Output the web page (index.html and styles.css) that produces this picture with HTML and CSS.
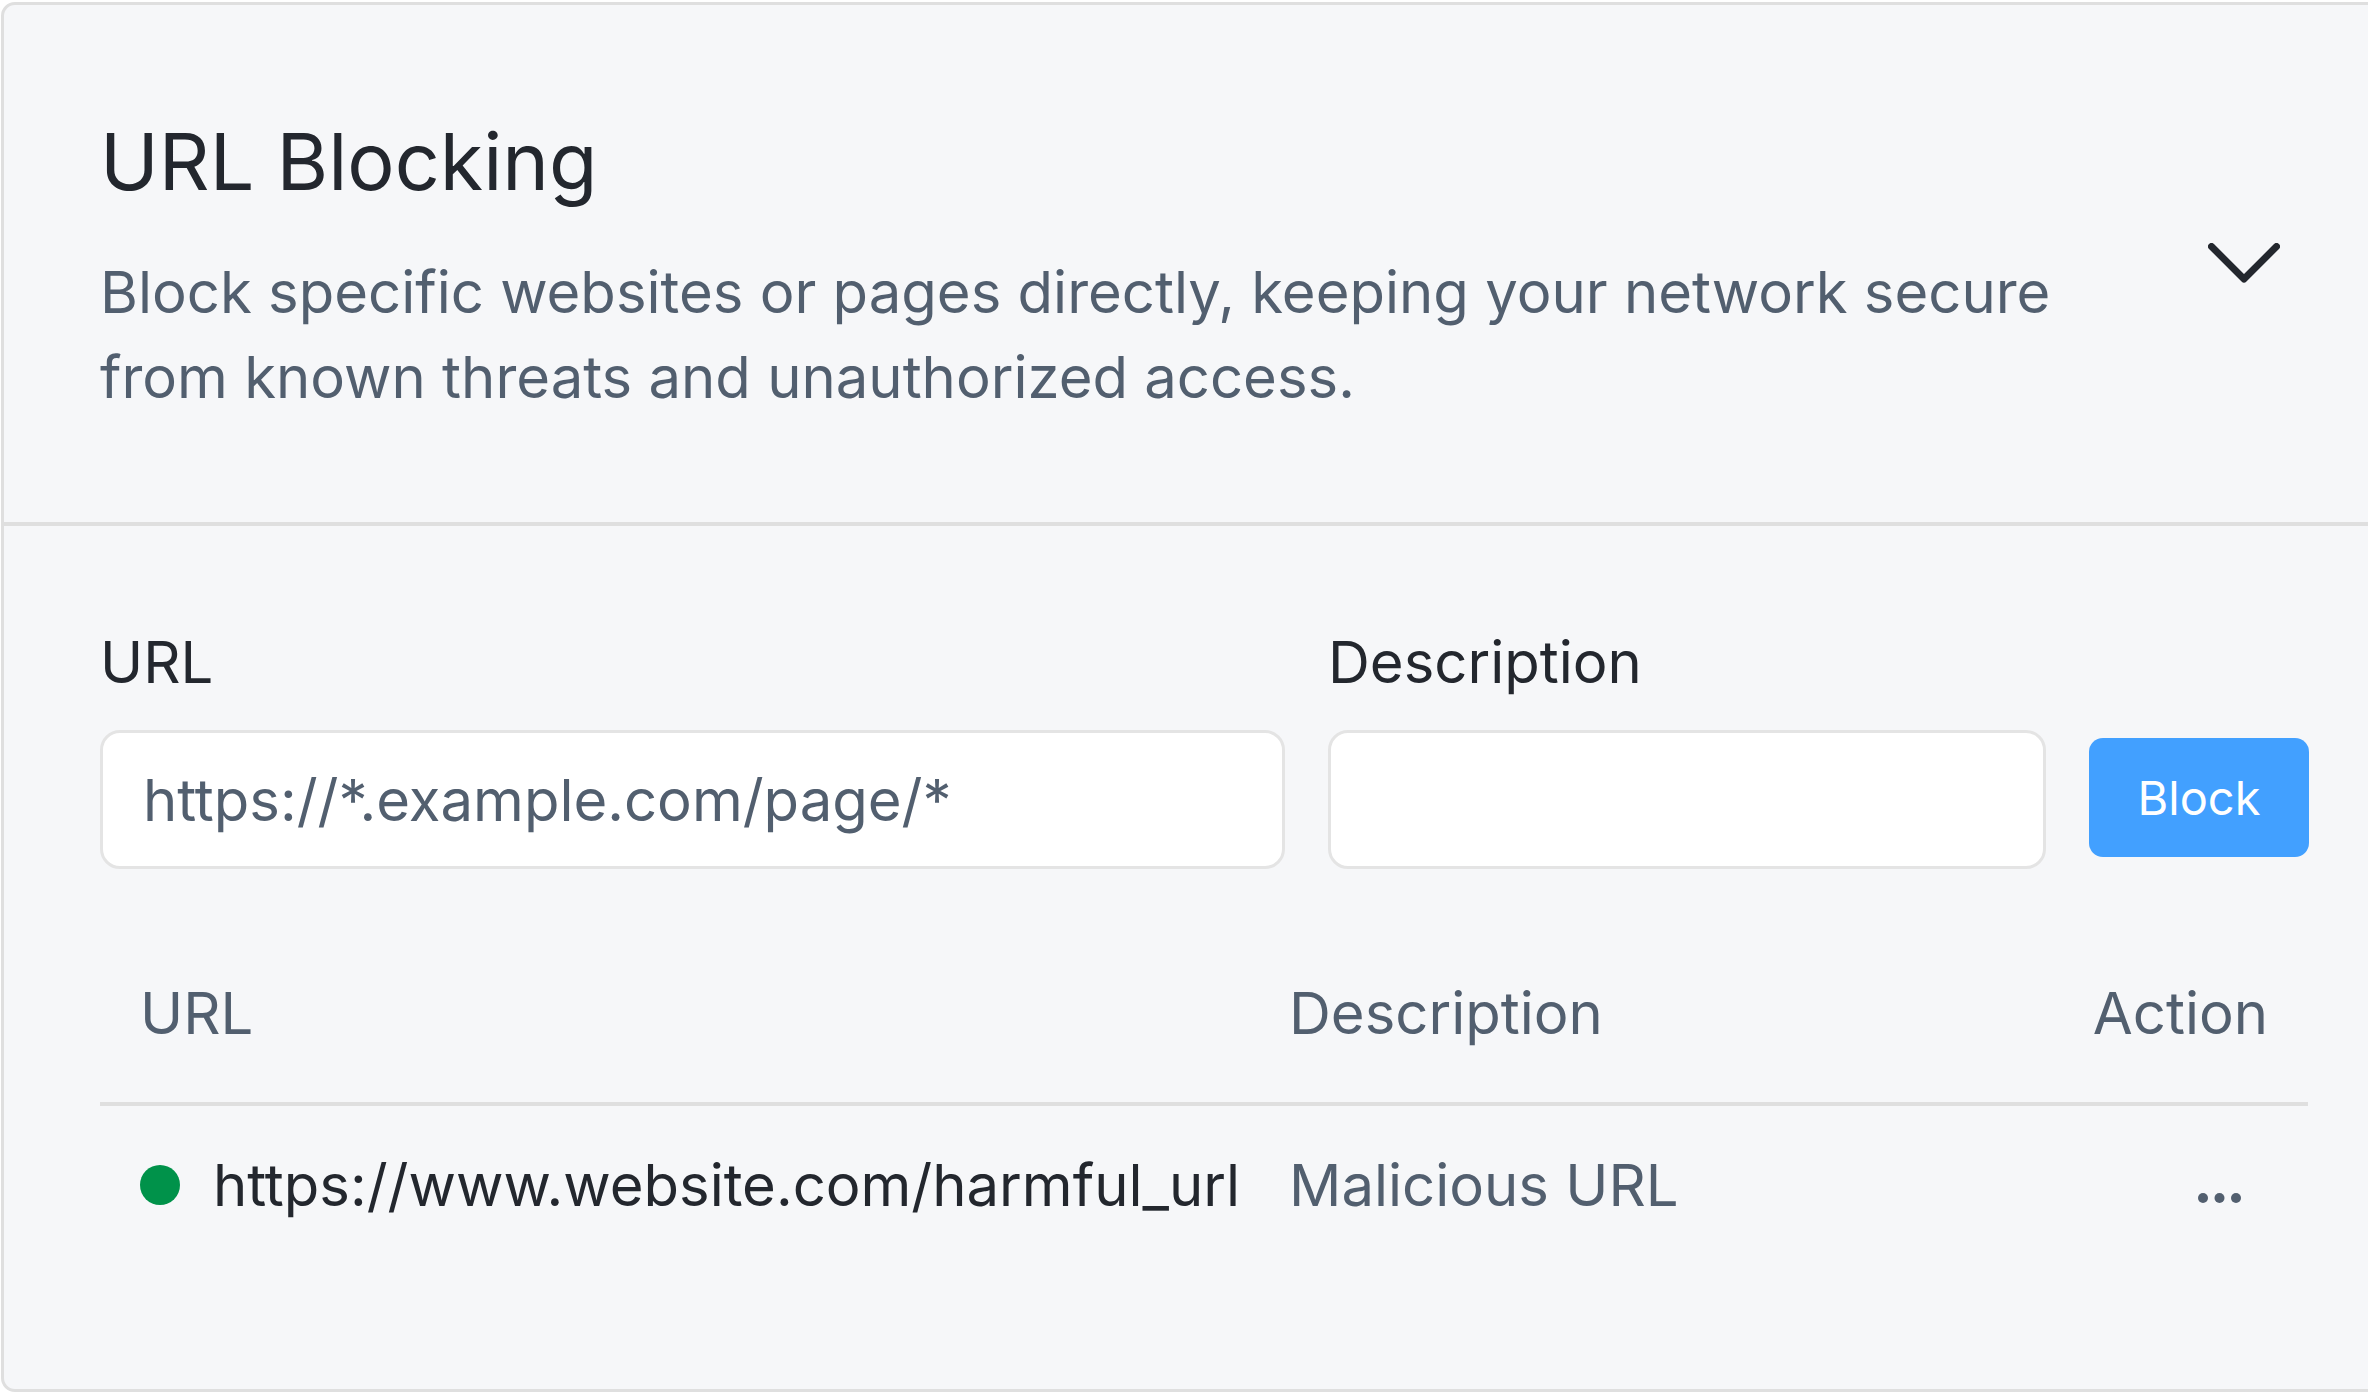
FILE: index.html
```html
<!DOCTYPE html>
<html lang="en">
<head>
<meta charset="utf-8">
<title>URL Blocking</title>
<link rel="stylesheet" href="styles.css">
</head>
<body>
<section class="card">
  <header class="card-header">
    <div class="header-text">
      <h1 class="title">URL Blocking</h1>
      <p class="subtitle">Block specific websites or pages directly, keeping your network secure from known threats and unauthorized access.</p>
    </div>
    <svg class="chevron" width="72" height="41" viewBox="0 0 72 41" aria-hidden="true">
      <path d="M3.5 3.5 L36 36 L68.5 3.5" fill="none" stroke="#23272e" stroke-width="7" stroke-linecap="round" stroke-linejoin="round"/>
    </svg>
  </header>
  <div class="card-body">
    <form class="block-form">
      <label class="field-label" for="url">URL</label>
      <label class="field-label" for="desc">Description</label>
      <span></span>
      <input class="field-input" id="url" type="text" placeholder="https://*.example.com/page/*">
      <input class="field-input" id="desc" type="text">
      <button class="btn-block" type="button">Block</button>
    </form>
    <div class="table">
      <div class="row head">
        <div class="cell">URL</div>
        <div class="cell">Description</div>
        <div class="cell action">Action</div>
      </div>
      <div class="row">
        <div class="cell url-cell"><span class="dot"></span><span class="url-text">https://www.website.com/harmful_url</span></div>
        <div class="cell muted">Malicious URL</div>
        <div class="cell action">
          <svg class="more" width="46" height="12" viewBox="0 0 46 12" aria-hidden="true">
            <circle cx="6" cy="6" r="5" fill="#525f6f"/>
            <circle cx="22.5" cy="6" r="5" fill="#525f6f"/>
            <circle cx="39" cy="6" r="5" fill="#525f6f"/>
          </svg>
        </div>
      </div>
    </div>
  </div>
</section>
</body>
</html>
```

FILE: styles.css
```css
* { box-sizing: border-box; }

html, body {
  margin: 0;
  padding: 0;
  background: #ffffff;
  overflow: hidden;
  width: 2368px;
  height: 1392px;
}

body {
  font-family: "Inter", "Noto Sans", "Liberation Sans", sans-serif;
  color: #23272e;
}

.card {
  margin: 2px 0 0 1px;
  width: 2406px;
  height: 1390px;
  background: #f6f7f9;
  border: 3px solid #dfdfdf;
  border-radius: 14px;
}

.card-header {
  display: flex;
  align-items: center;
  gap: 40px;
  padding: 108px 96px 102px 96px;
  border-bottom: 4px solid #dfdfdf;
}

.header-text {
  flex: 1;
  min-width: 0;
}

.title {
  margin: 0;
  font-size: 79px;
  line-height: 96px;
  font-weight: 400;
  color: #23272e;
}

.subtitle {
  margin: 41px 0 0 0;
  font-size: 58px;
  line-height: 85px;
  color: #525f6f;
}

.chevron {
  flex: none;
  margin: 0 28px 6px 0;
  display: block;
}

.card-body {
  padding: 101px 96px 0 96px;
}

.block-form {
  display: grid;
  grid-template-columns: 1185px 718px 220px;
  column-gap: 43px;
  row-gap: 33px;
  margin: 0;
}

.field-label {
  font-size: 58px;
  line-height: 70px;
  color: #23272e;
}

.field-input {
  height: 139px;
  border: 3px solid #e4e4e4;
  border-radius: 20px;
  background: #ffffff;
  padding: 0 40px;
  font-family: inherit;
  font-size: 58px;
  color: #525f6f;
  outline: none;
}

.field-input::placeholder {
  color: #525f6f;
  opacity: 1;
}

.btn-block {
  align-self: center;
  margin-bottom: 4px;
  height: 119px;
  border: none;
  border-radius: 14px;
  background: #42a0ff;
  color: #ffffff;
  font-family: inherit;
  font-size: 47px;
  padding: 0;
}

.table {
  margin-top: 55px;
}

.row {
  display: grid;
  grid-template-columns: 1149px 1fr auto;
  font-size: 58px;
  line-height: 70px;
}

.row.head {
  color: #525f6f;
  border-bottom: 4px solid #dfdfdf;
}

.row.head .cell {
  padding: 54px 40px;
}

.cell {
  padding: 44px 40px;
  white-space: nowrap;
}

.action {
  text-align: right;
}

.url-cell {
  display: flex;
  align-items: center;
  gap: 33px;
  color: #23272e;
}

.dot {
  flex: none;
  width: 40px;
  height: 40px;
  border-radius: 50%;
  background: #00924a;
}

.muted {
  color: #525f6f;
}

.more {
  display: block;
  margin: 42px 25px 0 auto;
}
```
